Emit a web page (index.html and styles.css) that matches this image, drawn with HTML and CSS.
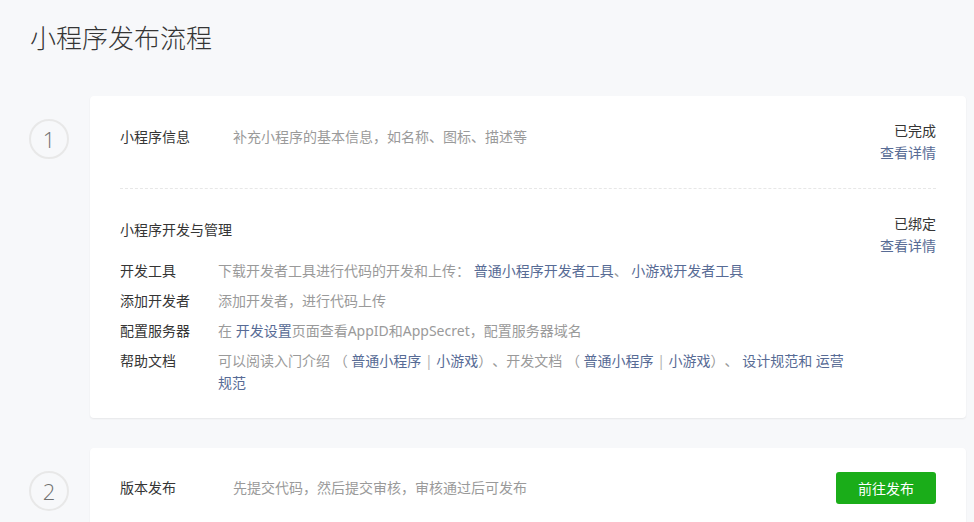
FILE: index.html
```html
<!DOCTYPE html>
<html lang="zh-CN">
<head>
<meta charset="utf-8">
<title>小程序发布流程</title>
<link rel="stylesheet" href="styles.css">
</head>
<body>
<div class="page">
  <h1 class="title">小程序发布流程</h1>

  <div class="step">
    <div class="num">1</div>
    <div class="card">
      <div class="sec">
        <div class="sec-main">
          <div class="head-row">
            <span class="lbl lbl-wide">小程序信息</span>
            <span class="desc">补充小程序的基本信息，如名称、图标、描述等</span>
          </div>
        </div>
        <div class="status">
          <div class="status-text">已完成</div>
          <a class="link">查看详情</a>
        </div>
      </div>
      <div class="divider"></div>
      <div class="sec">
        <div class="sec-main">
          <div class="sub-title">小程序开发与管理</div>
          <ul class="rows">
            <li class="row"><span class="lbl">开发工具</span><span class="desc">下载开发者工具进行代码的开发和上传： <a class="link">普通小程序开发者工具</a>、 <a class="link">小游戏开发者工具</a></span></li>
            <li class="row"><span class="lbl">添加开发者</span><span class="desc">添加开发者，进行代码上传</span></li>
            <li class="row"><span class="lbl">配置服务器</span><span class="desc">在 <a class="link">开发设置</a>页面查看AppID和AppSecret，配置服务器域名</span></li>
            <li class="row"><span class="lbl">帮助文档</span><span class="desc">可以阅读入门介绍 （ <a class="link">普通小程序</a> <span class="sep">|</span> <a class="link">小游戏</a>）、开发文档 （ <a class="link">普通小程序</a> <span class="sep">|</span> <a class="link">小游戏</a>）、 <a class="link">设计规范和</a> <a class="link">运营<wbr>规范</a></span></li>
          </ul>
        </div>
        <div class="status">
          <div class="status-text">已绑定</div>
          <a class="link">查看详情</a>
        </div>
      </div>
    </div>
  </div>

  <div class="step">
    <div class="num">2</div>
    <div class="card">
      <div class="pub-row">
        <span class="lbl lbl-wide">版本发布</span>
        <span class="desc grow">先提交代码，然后提交审核，审核通过后可发布</span>
        <button class="btn">前往发布</button>
      </div>
    </div>
  </div>
</div>
</body>
</html>
```
FILE: styles.css
```css
* { box-sizing: border-box; }
html, body {
  margin: 0;
  background: #f7f8fa;
}
body {
  font-family: "Noto Sans", "Noto Sans CJK SC", sans-serif;
  font-size: 14px;
  color: #353535;
  overflow: hidden;
  text-spacing-trim: space-all;
}
.page {
  padding: 20px 8px 0 29px;
}
.title {
  margin: 0 0 40px 1px;
  font-size: 26px;
  line-height: 36px;
  font-weight: 300;
  color: #353535;
}
.step {
  display: flex;
  align-items: flex-start;
  margin-bottom: 30px;
}
.num {
  flex: none;
  width: 40px;
  height: 40px;
  margin: 23px 21px 0 0;
  border: 2px solid #e8e8e8;
  border-radius: 50%;
  display: flex;
  align-items: center;
  justify-content: center;
  font-family: "Open Sans", "Noto Sans", sans-serif;
  font-weight: 300;
  font-size: 22px;
  color: #707070;
}
.card {
  flex: 1;
  background: #fff;
  border-radius: 4px;
  padding: 24px 30px;
  box-shadow: 0 1px 2px rgba(0, 0, 0, 0.07);
}
.sec {
  display: flex;
  align-items: flex-start;
}
.sec-main {
  flex: 1;
  min-width: 0;
}
.head-row {
  display: flex;
  padding-top: 6px;
  line-height: 22px;
}
.lbl {
  flex: none;
  width: 98px;
  color: #353535;
}
.lbl-wide {
  width: 113px;
}
.desc {
  color: #9a9a9a;
}
.grow {
  flex: 1;
}
.status {
  flex: none;
  margin-left: 30px;
  text-align: right;
  line-height: 22px;
}
.status-text {
  color: #353535;
}
.link {
  color: #576b95;
  text-decoration: none;
}
.divider {
  margin: 24px 0 24px;
  border-top: 1px dashed #e7e7e7;
}
.sub-title {
  padding-top: 6px;
  line-height: 22px;
  margin-bottom: 19px;
}
.rows {
  list-style: none;
  margin: 0;
  padding: 0;
  display: flex;
  flex-direction: column;
  gap: 8px;
}
.row {
  display: flex;
  line-height: 22px;
}
.sep {
  color: #b2b2b2;
}
.pub-row {
  display: flex;
  align-items: center;
  line-height: 22px;
}
.btn {
  flex: none;
  width: 100px;
  height: 32px;
  border: 0;
  border-radius: 3px;
  background: #1aad19;
  color: #fff;
  font-family: "Noto Sans CJK SC", sans-serif;
  font-size: 14px;
  padding: 0;
}
```
